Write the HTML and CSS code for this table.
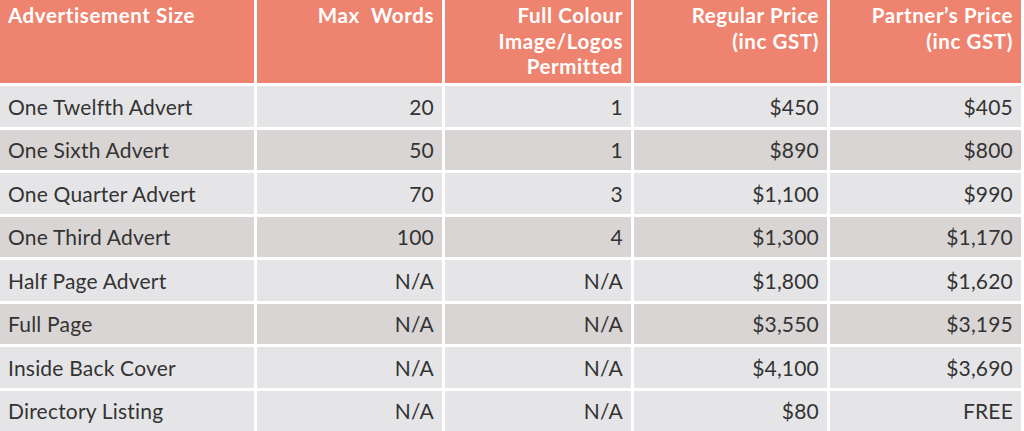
FILE: index.html
```html
<!DOCTYPE html>
<html lang="en">
<head>
<meta charset="utf-8">
<title>Advertisement Rates</title>
<link rel="stylesheet" href="styles.css">
</head>
<body>
<div class="rates">
  <div class="cell head left">Advertisement Size</div>
  <div class="cell head">Max&nbsp; Words</div>
  <div class="cell head">Full Colour<br>Image/Logos<br>Permitted</div>
  <div class="cell head">Regular Price<br>(inc GST)</div>
  <div class="cell head">Partner’s Price<br>(inc GST)</div>

  <div class="cell light left">One Twelfth Advert</div>
  <div class="cell light">20</div>
  <div class="cell light">1</div>
  <div class="cell light">$450</div>
  <div class="cell light">$405</div>

  <div class="cell dark left">One Sixth Advert</div>
  <div class="cell dark">50</div>
  <div class="cell dark">1</div>
  <div class="cell dark">$890</div>
  <div class="cell dark">$800</div>

  <div class="cell light left">One Quarter Advert</div>
  <div class="cell light">70</div>
  <div class="cell light">3</div>
  <div class="cell light">$1,100</div>
  <div class="cell light">$990</div>

  <div class="cell dark left">One Third Advert</div>
  <div class="cell dark">100</div>
  <div class="cell dark">4</div>
  <div class="cell dark">$1,300</div>
  <div class="cell dark">$1,170</div>

  <div class="cell light left">Half Page Advert</div>
  <div class="cell light">N/A</div>
  <div class="cell light">N/A</div>
  <div class="cell light">$1,800</div>
  <div class="cell light">$1,620</div>

  <div class="cell dark left">Full Page</div>
  <div class="cell dark">N/A</div>
  <div class="cell dark">N/A</div>
  <div class="cell dark">$3,550</div>
  <div class="cell dark">$3,195</div>

  <div class="cell light left">Inside Back Cover</div>
  <div class="cell light">N/A</div>
  <div class="cell light">N/A</div>
  <div class="cell light">$4,100</div>
  <div class="cell light">$3,690</div>

  <div class="cell light left">Directory Listing</div>
  <div class="cell light">N/A</div>
  <div class="cell light">N/A</div>
  <div class="cell light">$80</div>
  <div class="cell light">FREE</div>
</div>
</body>
</html>
```

FILE: styles.css
```css
html, body {
  margin: 0;
  padding: 0;
  background: #ffffff;
}

body {
  font-family: Lato, "Open Sans", "Liberation Sans", sans-serif;
  color: #333333;
}

.rates {
  display: grid;
  grid-template-columns: 254px 185px 186px 193px 191px;
  grid-template-rows: 83px repeat(8, 40.5px);
  gap: 3px;
  width: 1021px;
}

.cell {
  box-sizing: border-box;
  text-align: right;
  padding: 0 8px;
  font-size: 21px;
  letter-spacing: 0.2px;
  display: flex;
  align-items: center;
  justify-content: flex-end;
}

.cell.left {
  text-align: left;
  justify-content: flex-start;
}

.head {
  background: #ee8470;
  color: #ffffff;
  font-weight: 700;
  font-size: 20.5px;
  letter-spacing: 0.6px;
  line-height: 25.5px;
  align-items: flex-start;
  padding-top: 3px;
}

.light {
  background: #e5e5e7;
}

.dark {
  background: #d9d5d4;
}
```
